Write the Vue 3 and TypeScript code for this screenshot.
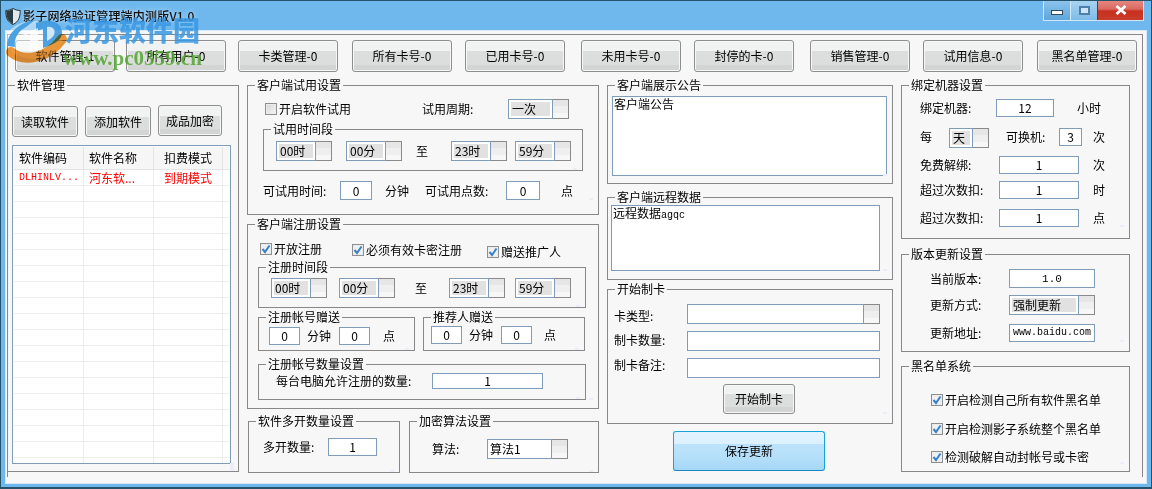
<script setup lang="ts">
interface ToolItem { label: string }
const tools: ToolItem[] = [
  { label: '软件管理-1' }, { label: '所有用户-0' }, { label: '卡类管理-0' }, { label: '所有卡号-0' },
  { label: '已用卡号-0' }, { label: '未用卡号-0' }, { label: '封停的卡-0' }, { label: '销售管理-0' },
  { label: '试用信息-0' }, { label: '黑名单管理-0' },
]
const emptyRows: number[] = Array.from({ length: 18 }, (_, i) => i)
</script>

<template>
  <div class="win">
    <header class="titlebar">
      <svg class="shield" width="16" height="17" viewBox="0 0 16 17">
        <path d="M8 .5 C5.500 2 3 2.500 .8 2.500 C.8 9 2 13.500 8 16.500 C14 13.500 15.200 9 15.200 2.500 C13 2.500 10.500 2 8 .5Z" fill="#dfe8ee" stroke="#26323a" stroke-width="1" />
        <path d="M8 1 C5.500 2.500 3 3 1.300 3 C1.300 9 2.500 13 8 16Z" fill="#2e3a42" />
      </svg>
      <span class="title">影子网络验证管理端内测版V1.0</span>
      <div class="ctrls">
        <button class="ctrl min"><i class="minbar"></i></button>
        <button class="ctrl max"><i class="maxbox"></i></button>
        <button class="ctrl close">
          <svg width="12" height="10" viewBox="0 0 12 10"><path d="M1.500 1 L10.500 9 M10.500 1 L1.500 9" stroke="#fff" stroke-width="2.800" /></svg>
        </button>
      </div>
    </header>

    <div class="client">
      <div class="inner">
        <nav class="toolbar">
          <button v-for="t in tools" :key="t.label" class="btn tool">{{ t.label }}</button>
        </nav>

        <main class="cols">
          <!-- column 1 -->
          <fieldset class="g soft">
            <legend>软件管理</legend>
            <div class="soft-btns">
              <button class="btn sb">读取软件</button>
              <button class="btn sb">添加软件</button>
              <button class="btn sb enc">成品加密</button>
            </div>
            <div class="table">
              <div class="tr th">
                <span class="c1">软件编码</span><span class="c2">软件名称</span><span class="c3 ctr">扣费模式</span><span class="c4"></span>
              </div>
              <div class="tr red">
                <span class="c1 mono">DLHINLV...</span><span class="c2">河东软...</span><span class="c3 ctr">到期模式</span><span class="c4"></span>
              </div>
              <div v-for="r in emptyRows" :key="r" class="tr">
                <span class="c1"></span><span class="c2"></span><span class="c3"></span><span class="c4"></span>
              </div>
            </div>
          </fieldset>

          <!-- column 2 -->
          <div class="col col2">
            <fieldset class="g trial">
              <legend>客户端试用设置</legend>
              <div class="row trial-r1">
                <label class="cb-item"><i class="cb"></i>开启软件试用</label>
                <span class="period">试用周期:</span>
                <div class="combo w61"><div class="val"><span class="sel">一次</span></div><i class="arrow"></i></div>
              </div>
              <fieldset class="g trial-time">
                <legend>试用时间段</legend>
                <div class="row spin-row t1">
                  <div class="combo w56"><div class="val"><span class="sel">00时</span></div><i class="arrow"></i></div>
                  <div class="combo w56 t-g2"><div class="val"><span class="sel">00分</span></div><i class="arrow"></i></div>
                  <span class="to t-g3">至</span>
                  <div class="combo w56 t-g4"><div class="val"><span class="sel">23时</span></div><i class="arrow"></i></div>
                  <div class="combo w56 t-g5"><div class="val"><span class="sel">59分</span></div><i class="arrow"></i></div>
                </div>
              </fieldset>
              <div class="row trial-r3">
                <span class="l77">可试用时间:</span>
                <div class="input w32 h19">0</div>
                <span class="m13">分钟</span>
                <span class="l81">可试用点数:</span>
                <div class="input w34 h19">0</div>
                <span class="m21">点</span>
              </div>
            </fieldset>

            <fieldset class="g reg">
              <legend>客户端注册设置</legend>
              <div class="row reg-checks">
                <label class="cb-item rc1"><i class="cb on"><svg width="10" height="10" viewBox="0 0 10 10"><path d="M1.500 5 L4 8 L8.500 1.500" fill="none" stroke="#3b7fc4" stroke-width="2" /></svg></i>开放注册</label>
                <label class="cb-item rc2"><i class="cb on"><svg width="10" height="10" viewBox="0 0 10 10"><path d="M1.500 5 L4 8 L8.500 1.500" fill="none" stroke="#3b7fc4" stroke-width="2" /></svg></i>必须有效卡密注册</label>
                <label class="cb-item rc3"><i class="cb on"><svg width="10" height="10" viewBox="0 0 10 10"><path d="M1.500 5 L4 8 L8.500 1.500" fill="none" stroke="#3b7fc4" stroke-width="2" /></svg></i>赠送推广人</label>
              </div>
              <fieldset class="g reg-time">
                <legend>注册时间段</legend>
                <div class="row spin-row t2">
                  <div class="combo w56"><div class="val"><span class="sel">00时</span></div><i class="arrow"></i></div>
                  <div class="combo w56 r-g2"><div class="val"><span class="sel">00分</span></div><i class="arrow"></i></div>
                  <span class="to r-g3">至</span>
                  <div class="combo w56 r-g4"><div class="val"><span class="sel">23时</span></div><i class="arrow"></i></div>
                  <div class="combo w56 r-g5"><div class="val"><span class="sel">59分</span></div><i class="arrow"></i></div>
                </div>
              </fieldset>
              <div class="row gifts">
                <fieldset class="g gift-a">
                  <legend>注册帐号赠送</legend>
                  <div class="row ga-row">
                    <div class="input w31 h18">0</div>
                    <span class="m7">分钟</span>
                    <div class="input w31 h18 m8">0</div>
                    <span class="m13">点</span>
                  </div>
                </fieldset>
                <fieldset class="g gift-b">
                  <legend>推荐人赠送</legend>
                  <div class="row gb-row">
                    <div class="input w31 h18">0</div>
                    <span class="m7">分钟</span>
                    <div class="input w31 h18 m8">0</div>
                    <span class="m12">点</span>
                  </div>
                </fieldset>
              </div>
              <fieldset class="g reg-count">
                <legend>注册帐号数量设置</legend>
                <div class="row rc-row">
                  <span class="l156">每台电脑允许注册的数量:</span>
                  <div class="input w111 h16">1</div>
                </div>
              </fieldset>
            </fieldset>

            <div class="row bottom-groups">
              <fieldset class="g multi">
                <legend>软件多开数量设置</legend>
                <div class="row multi-row">
                  <span class="l65">多开数量:</span>
                  <div class="input w49 h18">1</div>
                </div>
              </fieldset>
              <fieldset class="g algo">
                <legend>加密算法设置</legend>
                <div class="row algo-row">
                  <span class="l55">算法:</span>
                  <div class="combo w81"><div class="val plain">算法1</div><i class="arrow"></i></div>
                </div>
              </fieldset>
            </div>
          </div>

          <!-- column 3 -->
          <div class="col col3">
            <fieldset class="g notice">
              <legend>客户端展示公告</legend>
              <div class="area a-notice">客户端公告</div>
            </fieldset>
            <fieldset class="g remote">
              <legend>客户端远程数据</legend>
              <div class="area a-remote">远程数据<span class="mono">agqc</span></div>
            </fieldset>
            <fieldset class="g make">
              <legend>开始制卡</legend>
              <div class="row mk mk1">
                <span class="l73 lb1">卡类型:</span>
                <div class="combo w193"><div class="val"></div><i class="arrow"></i></div>
              </div>
              <div class="row mk mk2">
                <span class="l73 lb2">制卡数量:</span>
                <div class="input w193 h20"></div>
              </div>
              <div class="row mk mk2">
                <span class="l73 lb3">制卡备注:</span>
                <div class="input w193 h20"></div>
              </div>
              <button class="btn mkbtn">开始制卡</button>
            </fieldset>
            <button class="save">保存更新</button>
          </div>

          <!-- column 4 -->
          <div class="col col4">
            <fieldset class="g bind">
              <legend>绑定机器设置</legend>
              <div class="row br b1">
                <span class="l76">绑定机器:</span>
                <div class="input w58 h18">12</div>
                <span class="m23">小时</span>
              </div>
              <div class="row br b2">
                <span class="l29">每</span>
                <div class="combo w40"><div class="val"><span class="sel">天</span></div><i class="arrow"></i></div>
                <span class="l53 m17">可换机:</span>
                <div class="input w23 h18">3</div>
                <span class="m11">次</span>
              </div>
              <div class="row br b3">
                <span class="l79">免费解绑:</span>
                <div class="input w80 h18">1</div>
                <span class="m14">次</span>
              </div>
              <div class="row br b4">
                <span class="l79">超过次数扣:</span>
                <div class="input w80 h18">1</div>
                <span class="m14">时</span>
              </div>
              <div class="row br b5">
                <span class="l79">超过次数扣:</span>
                <div class="input w80 h18">1</div>
                <span class="m14">点</span>
              </div>
            </fieldset>

            <fieldset class="g ver">
              <legend>版本更新设置</legend>
              <div class="row vr v1">
                <span class="l79">当前版本:</span>
                <div class="input w86 h19 spaced">1.0</div>
              </div>
              <div class="row vr v2">
                <span class="l79">更新方式:</span>
                <div class="combo w86"><div class="val"><span class="sel">强制更新</span></div><i class="arrow"></i></div>
              </div>
              <div class="row vr v3">
                <span class="l79">更新地址:</span>
                <div class="input w86 h18 mono">www.baidu.com</div>
              </div>
            </fieldset>

            <fieldset class="g black">
              <legend>黑名单系统</legend>
              <label class="cb-item bl bl1"><i class="cb on"><svg width="10" height="10" viewBox="0 0 10 10"><path d="M1.500 5 L4 8 L8.500 1.500" fill="none" stroke="#3b7fc4" stroke-width="2" /></svg></i>开启检测自己所有软件黑名单</label>
              <label class="cb-item bl bl2"><i class="cb on"><svg width="10" height="10" viewBox="0 0 10 10"><path d="M1.500 5 L4 8 L8.500 1.500" fill="none" stroke="#3b7fc4" stroke-width="2" /></svg></i>开启检测影子系统整个黑名单</label>
              <label class="cb-item bl bl3"><i class="cb on"><svg width="10" height="10" viewBox="0 0 10 10"><path d="M1.500 5 L4 8 L8.500 1.500" fill="none" stroke="#3b7fc4" stroke-width="2" /></svg></i>检测破解自动封帐号或卡密</label>
            </fieldset>
          </div>
        </main>
      </div>
    </div>

    <!-- site watermark lying over the window -->
    <div class="wm">
      <svg class="wm-logo" width="70" height="56" viewBox="0 0 70 56">
        <ellipse cx="34" cy="26" rx="28" ry="19" fill="#ffffff" opacity=".45" />
        <path d="M7 32 C7 19 20 8 35 6 L26 13 C17 18 14 25 15 33 Z" fill="#3f9ade" opacity=".92" />
        <path d="M36 9 C52 3 63 10 62 20 C61 27 52 31 43 34 L43 15 L36 17Z" fill="#3f9ade" opacity=".92" />
        <path d="M18 23 L38 14 L38 36 L30 37 L30 20Z" fill="#ffffff" opacity=".75" />
        <path d="M47 13 C53 12 56 16 54 21 C52 24 49 26 47 27Z" fill="#ffffff" opacity=".75" />
      </svg>
      <svg class="wm-logo wm-orange" width="70" height="56" viewBox="0 0 70 56">
        <path d="M11 38 C24 49 48 44 62 25" fill="none" stroke="#f09a3c" stroke-width="10" stroke-linecap="round" />
      </svg>
      <span class="wm-cn">河东软件园</span>
      <span class="wm-url">www.pc0359.cn</span>
    </div>
  </div>
</template>

<style>
html, body { margin: 0; padding: 0; background: #6fb7ee; }
</style>

<style scoped>
* { box-sizing: border-box; }
.win {
  position: relative;
  width: 1152px;
  height: 489px;
  overflow: hidden;
  display: flex;
  flex-direction: column;
  background: #6fb8ee;
  border: 1px solid #24536b;
  border-bottom-width: 2px;
  padding: 0 4px 3px 4px;
  color: #000;
  font: 12px/14px "Noto Sans CJK SC", "Liberation Sans", sans-serif;
}
.titlebar { height: 29px; flex: none; display: flex; align-items: flex-start; position: relative; }
.shield { margin: 7px 0 0 0; flex: none; }
.title {
  margin: 8px 0 0 2px;
  font-weight: 500;
  letter-spacing: .2px;
  color: #111;
  text-shadow: 0 0 5px rgba(255, 255, 255, .75);
  white-space: nowrap;
}
.ctrls {
  margin-left: auto;
  margin-right: 3px;
  display: flex;
  height: 21px;
  border: 1px solid #cfe6f8;
  border-top: 0;
  margin-top: -1px;
}
.ctrl { border: 0; padding: 0; display: flex; align-items: center; justify-content: center; height: 20px; }
.min { width: 27px; background: linear-gradient(#8ec5ec, #5ea6dc); border-right: 1px solid #d5e8f7; padding-top: 4px; }
.max { width: 26px; background: linear-gradient(#a9d4f2, #7fbce8); }
.close { width: 46px; background: linear-gradient(#e58b84 0, #db6a60 45%, #c9301f 55%, #c83c2c 100%); border-left: 1px solid #7a2c26; }
.minbar { display: block; width: 12px; height: 5px; background: #fff; border: 1px solid #33495a; }
.maxbox { display: block; width: 11px; height: 9px; border: 2px solid #4d7fa8; background: #cfe5f5; }

.client {
  flex: 1;
  background: #f7f7f7;
  border: 1px solid #d7e9f7;
  padding: 3px 3px 6px 1px;
  min-height: 0;
}
.inner {
  height: 100%;
  border: 1px solid #888;
  border-bottom: 0;
}
.toolbar { display: flex; padding: 5px 0 0 7px; }
.btn {
  border: 1px solid #8e8e8e;
  border-radius: 3px;
  padding: 0;
  font: inherit;
  color: #000;
  background: linear-gradient(#f1f2f2 0, #f1f2f2 33%, #dcdddd 33%, #dcdddd 80%, #d3d4d4 80%, #d3d4d4 100%);
  box-shadow: inset 0 0 0 1px #f7f7f7;
  white-space: nowrap;
}
.tool { width: 100px; height: 32px; flex: none; }
.tool:nth-child(2) { margin-left: 11px; }
.tool:nth-child(3) { margin-left: 12px; }
.tool:nth-child(4) { margin-left: 14px; }
.tool:nth-child(5) { margin-left: 13px; }
.tool:nth-child(6) { margin-left: 16px; }
.tool:nth-child(7) { margin-left: 13px; }
.tool:nth-child(8) { margin-left: 16px; }
.tool:nth-child(9) { margin-left: 13px; }
.tool:nth-child(10) { margin-left: 14px; }

.cols { display: flex; margin-top: 6px; margin-left: -1px; gap: 8px; align-items: flex-start; }
.col { display: flex; flex-direction: column; flex: none; }
.col2 { width: 352px; }
.col3 { width: 286px; }
.col4 { width: 229px; }

.g {
  position: relative;
  margin: 0;
  padding: 0;
  min-width: 0;
  border: 1px solid #888;
  flex: none;
}
.g > legend {
  margin-left: 7px;
  padding: 0 2px;
  line-height: 14px;
  font-size: 12px;
  white-space: nowrap;
}
.g::after {
  content: "";
  position: absolute;
  right: 5px;
  bottom: 0;
  width: 4px;
  height: 2px;
  background: #ecedf8;
}
.row { display: flex; align-items: center; }
.mono { font-family: "Liberation Mono", "DejaVu Sans Mono", monospace; font-size: 10px; }

.input {
  display: flex;
  align-items: center;
  justify-content: center;
  background: #fff;
  border: 1px solid #7f9db9;
  flex: none;
  overflow: hidden;
  white-space: nowrap;
}
.combo { display: flex; flex: none; height: 20px; }
.combo .val {
  flex: 1;
  min-width: 0;
  background: #fff;
  border: 1px solid #7f9db9;
  padding: 2px;
  display: flex;
}
.combo .sel { flex: 1; background: #e1e1e1; padding-left: 1px; line-height: 14px; white-space: nowrap; }
.combo .plain { padding: 2px 2px; line-height: 14px; }
.arrow {
  display: block;
  width: 16px;
  flex: none;
  border: 1px solid #8a8a8a;
  border-left: 0;
  background: linear-gradient(#e6e6e6 0, #e6e6e6 34%, #efefef 34%, #efefef 70%, #f7f7f7 70%);
}
.cb-item { display: flex; align-items: center; white-space: nowrap; }
.cb {
  display: flex;
  align-items: center;
  justify-content: center;
  width: 12px;
  height: 12px;
  margin-right: 2px;
  flex: none;
  border: 1px solid #8f8f8f;
  background: linear-gradient(135deg, #d5d5d5, #f5f5f5);
  box-shadow: inset 0 0 0 1px #ececec;
}
.cb.on { background: #eef1f4; }
.to { flex: none; width: 12px; }

.w23 { width: 23px; } .w31 { width: 31px; } .w32 { width: 32px; } .w34 { width: 34px; }
.w40 { width: 40px; } .w49 { width: 49px; } .w56 { width: 56px; } .w58 { width: 58px; }
.w61 { width: 61px; } .w80 { width: 80px; } .w81 { width: 81px; } .w86 { width: 86px; }
.w111 { width: 111px; } .w193 { width: 193px; }
.h16 { height: 16px; } .h18 { height: 18px; } .h19 { height: 19px; } .h20 { height: 20px; }
.m7 { margin-left: 7px; } .m8 { margin-left: 8px; } .m11 { margin-left: 11px; } .m12 { margin-left: 12px; }
.m13 { margin-left: 13px; } .m14 { margin-left: 14px; } .m17 { margin-left: 17px; } .m21 { margin-left: 21px; }
.m23 { margin-left: 23px; }
.l29 { width: 29px; flex: none; } .l53 { width: 53px; flex: none; } .l55 { width: 55px; flex: none; }
.l65 { width: 65px; flex: none; } .l73 { width: 73px; flex: none; } .l76 { width: 76px; flex: none; }
.l77 { width: 77px; flex: none; } .l79 { width: 79px; flex: none; white-space: nowrap; } .l81 { width: 81px; flex: none; margin-left: 16px; }
.l156 { width: 156px; flex: none; white-space: nowrap; }

/* column 1 */
.soft { width: 232px; height: 394px; }
.soft::after { right: 4px; height: 8px; }
.soft-btns { display: flex; gap: 7px; margin: 14px 0 0 4px; align-items: flex-start; }
.sb { width: 66px; height: 31px; }
.sb.enc { width: 64px; margin-top: -1px; }
.table {
  margin: 8px 0 0 4px;
  width: 219px;
  height: 319px;
  border: 1px solid #7f9db9;
  background: #fff;
  padding: 1px;
  overflow: hidden;
}
.tr { display: grid; grid-template-columns: 70px 70px 69px 8px; height: 16px; }
.tr > span { border-bottom: 1px solid #ededed; border-right: 1px solid #ededed; padding-left: 5px; line-height: 15px; white-space: nowrap; overflow: hidden; }
.tr.th { height: 23px; background: #f6f6f6; }
.tr.th > span { line-height: 22px; border-color: #e4e4e4; }
.ctr { text-align: center; padding-left: 0 !important; }
.red { color: #f00; }

/* column 2 */
.trial { height: 137px; }
.trial-r1 { margin-top: 7px; height: 20px; padding-left: 17px; }
.period { margin-left: 71px; width: 86px; flex: none; }
.trial-time { margin: 3px 0 0 15px; width: 320px; height: 49px; }
.spin-row { height: 20px; }
.t1 { margin: 5px 0 0 12px; }
.t-g2 { margin-left: 14px; } .t-g3 { margin-left: 14px; } .t-g4 { margin-left: 23px; } .t-g5 { margin-left: 8px; }
.trial-r3 { margin: 10px 0 0 15px; height: 19px; }
.reg { height: 192px; margin-top: 2px; }
.reg-checks { margin-top: 11px; height: 14px; padding-left: 12px; align-items: flex-start; }
.rc2 { margin-left: 30px; margin-top: 1px; }
.rc3 { margin-left: 25px; margin-top: 3px; }
.reg-time { margin: 4px 0 0 10px; width: 328px; height: 48px; }
.t2 { margin: 4px 0 0 12px; }
.r-g2 { margin-left: 12px; } .r-g3 { margin-left: 20px; } .r-g4 { margin-left: 22px; } .r-g5 { margin-left: 10px; }
.gifts { margin: 2px 0 0 10px; gap: 8px; align-items: flex-start; }
.gift-a { width: 157px; height: 41px; }
.gift-b { width: 162px; height: 41px; }
.ga-row { margin: 3px 0 0 10px; }
.gb-row { margin: 2px 0 0 7px; }
.reg-count { margin: 6px 0 0 10px; width: 328px; height: 43px; }
.rc-row { margin: 2px 0 0 17px; }
.bottom-groups { margin: 5px 0 0 1px; gap: 9px; align-items: flex-start; }
.multi { width: 152px; height: 59px; }
.algo { width: 190px; height: 59px; }
.multi-row { margin: 10px 0 0 14px; }
.algo-row { margin: 11px 0 0 22px; }

/* column 3 */
.notice { height: 106px; }
.remote { height: 90px; margin-top: 6px; }
.make { height: 142px; margin-top: 2px; }
.area { background: #fff; border: 1px solid #7f9db9; padding: 0 1px; line-height: 14px; }
.a-notice { margin: 4px 0 0 4px; width: 275px; height: 80px; }
.a-remote { margin: 1px 0 0 3px; width: 269px; height: 66px; }
.mk { margin-left: 6px; height: 20px; }
.mk1 { margin-top: 8px; }
.mk2 { margin-top: 7px; }
.lb1 { margin-top: 4px; }
.lb2 { margin-top: -2px; }
.lb3 { margin-top: -7px; }
.mkbtn { display: block; margin: 6px 0 0 115px; width: 72px; height: 30px; }
.save {
  margin: 7px 0 0 66px;
  width: 152px;
  height: 40px;
  border: 1px solid #1aa3d6;
  border-bottom-color: #1f86bf;
  border-radius: 3px;
  padding: 0;
  font: inherit;
  color: #000;
  background: linear-gradient(#e2f3fe 0, #dcf0fe 32%, #bde3fb 32%, #b6e0fa 62%, #a5d7f5 100%);
}

/* column 4 */
.bind { height: 161px; }
.br { margin-left: 18px; }
.b1 { margin-top: 7px; }
.b2 { margin-top: 11px; align-items: flex-start; }
.b2 > span { line-height: 18px; }
.b3 { margin-top: 8px; }
.b4 { margin-top: 7px; }
.b5 { margin-top: 10px; }
.ver { height: 105px; margin-top: 8px; }
.vr { margin-left: 28px; }
.v1 { margin-top: 8px; }
.v2 { margin-top: 7px; }
.v3 { margin-top: 9px; }
.spaced { font-family: "Liberation Mono", monospace; font-size: 11px; }
.black { height: 113px; margin-top: 7px; }
.bl { margin-left: 29px; height: 14px; }
.bl1 { margin-top: 20px; }
.bl2 { margin-top: 15px; }
.bl3 { margin-top: 14px; }

/* watermark */
.wm { position: absolute; left: -1px; top: 13px; width: 210px; height: 60px; pointer-events: none; }
.wm-logo { position: absolute; left: 0; top: 0; }
.wm-orange { mix-blend-mode: multiply; }
.wm-cn {
  position: absolute;
  left: 65px;
  top: 1px;
  font-size: 27px;
  line-height: 30px;
  font-weight: 900;
  color: rgba(58, 150, 226, .85);
  white-space: nowrap;
}
.wm-url {
  position: absolute;
  left: 63px;
  top: 32px;
  font: bold 21px/24px "Liberation Serif", serif;
  color: rgba(84, 165, 50, .85);
  white-space: nowrap;
}
</style>
